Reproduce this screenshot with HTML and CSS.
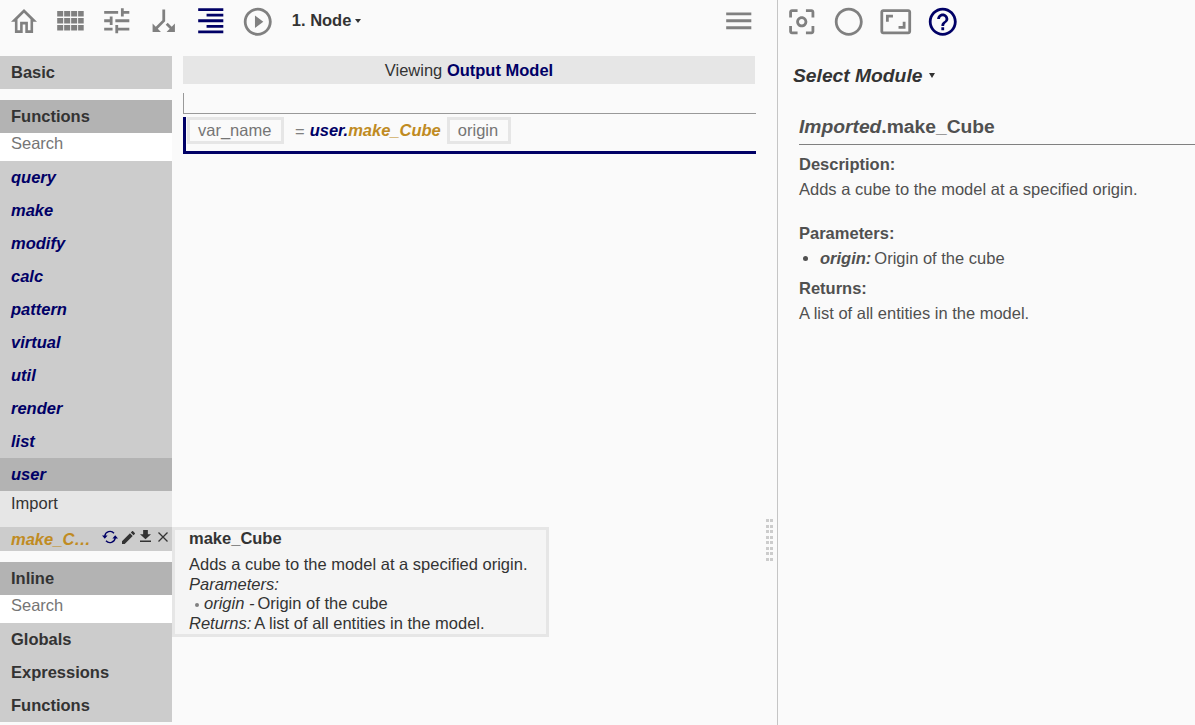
FILE: index.html
```
<!DOCTYPE html>
<html lang="en">
<head>
<meta charset="utf-8">
<title>Node editor</title>
<link rel="stylesheet" href="styles.css">
</head>
<body>
<div class="app">
  <section class="editor">
    <header class="toolbar">
      <span class="tool"><svg class="home" viewBox="2 3 20 17" preserveAspectRatio="none"><path d="M12 5.69l5 4.5V18h-2v-6H9v6H7v-7.81l5-4.5M12 3L2 12h3v8h6v-6h2v6h6v-8h3L12 3z"/></svg></span>
      <span class="tool"><svg class="icon grid" viewBox="0 0 24 24"><path d="M3 9h4.300V5H3zM3 14h4.300v-4H3zM8 14h4.300v-4H8zM13 14h4.300v-4H13zM8 9h4.300V5H8zM13 5v4h4.300V5zM18 14h4v-4h-4zM3 19h4.300v-4H3zM8 19h4.300v-4H8zM13 19h4.300v-4H13zM18 19h4v-4h-4zM18 5v4h4V5z"/></svg></span>
      <span class="tool"><svg class="icon" viewBox="0 0 24 24"><path d="M3 17v2h6v-2H3zM3 5v2h10V5H3zm10 16v-2h8v-2h-8v-2h-2v6h2zM7 9v2H3v2h4v2h2V9H7zm14 4v-2H11v2h10zm-6-4h2V7h4V5h-4V3h-2v6z"/></svg></span>
      <span class="tool"><svg class="icon flip" viewBox="0 0 24 24"><path d="M14 4l2.29 2.29-2.88 2.88 1.42 1.42 2.88-2.88L20 10V4zm-4 0H4v6l2.29-2.29 4.71 4.7V20h2v-8.41l-5.29-5.3z"/></svg></span>
      <span class="tool active"><svg class="icon" viewBox="0 0 24 24"><path d="M3 21h18v-2H3v2zm6-4h12v-2H9v2zm-6-4h18v-2H3v2zm6-4h12V7H9v2zM3 3v2h18V3H3z"/></svg></span>
      <span class="tool"><svg class="icon low" viewBox="0 0 24 24"><path d="M10 16.5l6-4.5-6-4.5v9zM12 2C6.48 2 2 6.48 2 12s4.48 10 10 10 10-4.48 10-10S17.52 2 12 2zm0 18c-4.41 0-8-3.59-8-8s3.59-8 8-8 8 3.59 8 8-3.59 8-8 8z"/></svg></span>
      <span class="node-name">1. Node<i class="caret"></i></span>
      <span class="tool menu"><svg class="icon" viewBox="0 0 24 24"><path d="M3 18h18v-2H3v2zm0-5h18v-2H3v2zm0-7v2h18V6H3z"/></svg></span>
    </header>
    <div class="workspace">
      <nav class="sidebar">
        <div class="row head">Basic</div>
        <div class="group">
          <div class="row head open">Functions</div>
          <div class="search">Search</div>
          <div class="row module">query</div>
          <div class="row module">make</div>
          <div class="row module">modify</div>
          <div class="row module">calc</div>
          <div class="row module">pattern</div>
          <div class="row module">virtual</div>
          <div class="row module">util</div>
          <div class="row module">render</div>
          <div class="row module">list</div>
          <div class="row module open">user</div>
          <div class="import">Import</div>
          <div class="user-func">
            <span class="func-name">make_C…</span>
            <span class="actions">
              <svg class="sync" viewBox="0 0 16 14"><path d="M2.800 6A5.300 5.300 0 0 1 12 3.200M13.200 8A5.300 5.300 0 0 1 4 10.800"/><path class="solid" d="M0 5.400h5.600L2.800 8.800zM16 8.600h-5.600l2.800-3.400z"/></svg>
              <svg class="pencil" viewBox="3 3 18 18"><path d="M3 17.25V21h3.75L17.81 9.94l-3.75-3.75L3 17.25zM20.71 7.04a1 1 0 0 0 0-1.41l-2.34-2.34a1 1 0 0 0-1.41 0l-1.83 1.83 3.75 3.75 1.83-1.83z"/></svg>
              <svg class="download" viewBox="5 3 14 17" preserveAspectRatio="none"><path d="M19 9h-4V3H9v6H5l7 7 7-7zM5 18v2h14v-2H5z"/></svg>
              <svg class="close" viewBox="0 0 10 10"><path d="M.5.5l9 9M9.5.5l-9 9"/></svg>
            </span>
            <aside class="tooltip">
              <h4>make_Cube</h4>
              <p>Adds a cube to the model at a specified origin.</p>
              <p><em>Parameters:</em></p>
              <p class="param"><i class="dot"></i><em>origin -</em><span class="value">Origin of the cube</span></p>
              <p><em>Returns:</em><span class="value">A list of all entities in the model.</span></p>
            </aside>
          </div>
        </div>
        <div class="group">
          <div class="row head open">Inline</div>
          <div class="search">Search</div>
          <div class="row head">Globals</div>
          <div class="row head">Expressions</div>
          <div class="row head">Functions</div>
        </div>
      </nav>
      <main class="procedure">
        <div class="viewing">Viewing&nbsp;<b>Output Model</b></div>
        <div class="blank-line"></div>
        <div class="statement">
          <span class="field var">var_name</span>
          <span class="equals">=</span>
          <span class="call">user.<span class="fn">make_Cube</span></span>
          <span class="field arg">origin</span>
        </div>
      </main>
    </div>
  </section>
  <div class="gutter">
    <div class="grip"><i></i><i></i><i></i><i></i><i></i><i></i><i></i><i></i><i></i><i></i><i></i><i></i><i></i><i></i><i></i><i></i></div>
  </div>
  <section class="help">
    <header class="toolbar">
      <span class="tool"><svg class="icon low" viewBox="0 0 24 24"><path d="M5 15H3v4c0 1.100.9 2 2 2h4v-2H5v-4zM5 5h4V3H5c-1.100 0-2 .9-2 2v4h2V5zm14-2h-4v2h4v4h2V5c0-1.100-.9-2-2-2zm0 16h-4v2h4c1.100 0 2-.9 2-2v-4h-2v4zM12 8c-2.210 0-4 1.790-4 4s1.790 4 4 4 4-1.790 4-4-1.790-4-4-4zm0 6c-1.100 0-2-.9-2-2s.9-2 2-2 2 .9 2 2-.9 2-2 2z"/></svg></span>
      <span class="tool"><svg class="icon low" viewBox="0 0 24 24"><path d="M12 2C6.480 2 2 6.480 2 12s4.480 10 10 10 10-4.480 10-10S17.520 2 12 2zm0 18c-4.410 0-8-3.590-8-8s3.590-8 8-8 8 3.590 8 8-3.590 8-8 8z"/></svg></span>
      <span class="tool"><svg class="icon low" viewBox="0 0 24 24"><path d="M19 12h-2v3h-3v2h5v-5zM7 9h3V7H5v5h2V9zm14-6H3c-1.100 0-2 .9-2 2v14c0 1.100.9 2 2 2h18c1.100 0 2-.9 2-2V5c0-1.100-.9-2-2-2zm0 16.010H3V4.990h18v14.020z"/></svg></span>
      <span class="tool active"><svg class="icon low" viewBox="0 0 24 24"><path d="M11 18h2v-2h-2v2zm1-16C6.480 2 2 6.480 2 12s4.480 10 10 10 10-4.480 10-10S17.520 2 12 2zm0 18c-4.410 0-8-3.590-8-8s3.590-8 8-8 8 3.590 8 8-3.590 8-8 8zm0-14c-2.210 0-4 1.790-4 4h2c0-1.100.9-2 2-2s2 .9 2 2c0 2-3 1.750-3 5h2c0-2.250 3-2.500 3-5 0-2.210-1.790-4-4-4z"/></svg></span>
    </header>
    <div class="select-module">Select Module<i class="caret"></i></div>
    <article class="doc">
      <h3><em>Imported</em>.make_Cube</h3>
      <h5>Description:</h5>
      <p class="description">Adds a cube to the model at a specified origin.</p>
      <h5>Parameters:</h5>
      <p class="doc-param"><i class="dot"></i><b><em>origin:</em></b><span>Origin of the cube</span></p>
      <h5 class="returns">Returns:</h5>
      <p>A list of all entities in the model.</p>
    </article>
  </section>
</div>
</body>
</html>
```
FILE: styles.css
```
* { box-sizing: border-box; }
body {
  margin: 0;
  height: 725px;
  overflow: hidden;
  background: #fafafa;
  color: #333;
  font: 16.5px/20px "Liberation Sans", Arial, sans-serif;
}
h3, h4, h5, p { margin: 0; }
svg { display: block; fill: currentColor; }
.app { display: flex; height: 725px; }
.editor { width: 756px; }

.toolbar { display: flex; height: 56px; color: #808080; }
.tool { width: 46.8px; height: 41px; display: flex; align-items: center; justify-content: center; flex: none; }
.tool.active { color: #006; }
.icon { width: 33.5px; height: 33.5px; }
.low { margin-top: 2px; }
.flip { transform: scaleY(-1); }
.home { width: 26px; height: 24px; margin-left: 1px; }
.node-name { margin-left: 11px; padding-top: 10px; color: #333; font-weight: bold; flex: 1; }
.menu { margin-right: -6px; }
.caret {
  display: inline-block;
  margin-left: 4px;
  vertical-align: 3px;
  border: 3px solid transparent;
  border-top: 4px solid #333;
  border-bottom: 0;
}

.workspace { display: flex; gap: 11px; }
.sidebar { width: 172px; display: flex; flex-direction: column; gap: 11px; flex: none; }
.row { height: 33px; padding: 6px 11px 0; background: #ccc; font-weight: bold; }
.row.open { background: #b3b3b3; }
.module { color: #006; font-style: italic; }
.search { height: 28px; padding: 0 11px; background: #fff; color: #757575; }
.import { height: 36px; padding: 2px 11px 0; background: #e6e6e6; }
.user-func { position: relative; height: 24px; display: flex; background: #ccc; }
.func-name { width: 102px; padding: 2px 0 0 11px; color: #c08b22; font-weight: bold; font-style: italic; }
.actions { display: flex; align-items: center; height: 20px; gap: 4px; }
.actions .pencil { width: 13px; height: 13px; }
.actions .sync { width: 16px; height: 14px; margin-top: -1px; fill: none; stroke: #006; stroke-width: 1.4; }
.sync .solid { fill: #006; stroke: none; }
.actions .download { width: 11px; height: 12px; margin: -2px 3px 0 1px; }
.actions .close { width: 10px; height: 10px; margin-top: -1px; stroke: #333; stroke-width: 1.3; }
.tooltip {
  position: absolute;
  left: 172px;
  top: 0;
  z-index: 2;
  width: 377px;
  height: 110px;
  padding: 0 14px;
  border: 3px solid #e6e6e6;
  background: #f5f5f5;
  line-height: 19.6px;
  white-space: nowrap;
}
.tooltip h4 { font-size: 16.5px; line-height: 17px; margin-bottom: 8px; }
.tooltip .value { margin-left: 3px; }
.param { display: flex; align-items: center; }
.dot { width: 5px; height: 5px; border-radius: 50%; background: currentColor; flex: none; }
.param .dot { margin: 3px 5px 0 6px; width: 4px; height: 4px; background: #808080; }

.procedure { flex: 1; }
.viewing { width: 572px; height: 28px; display: flex; justify-content: center; padding-top: 4px; background: #e6e6e6; }
.viewing b { color: #006; }
.blank-line { height: 21px; margin: 9px 0 3px; border-left: 1px solid #999; border-bottom: 1px solid #999; }
.statement {
  height: 37px;
  display: flex;
  align-items: flex-start;
  border-left: 3px solid #006;
  border-bottom: 3px solid #006;
}
.field { height: 27px; padding: 0 8px; border: 3px solid #e6e6e6; color: #757575; }
.var { width: 97px; margin-left: 1px; }
.arg { width: 64px; margin-left: 6px; }
.equals { margin: 4px 5px 0 11px; color: #808080; }
.call { margin-top: 3px; color: #006; font-weight: bold; font-style: italic; }
.fn { color: #c08b22; }

.gutter { width: 22px; border-right: 1px solid #c5c5c5; padding: 519px 0 0 10px; }
.grip { display: grid; grid-template-columns: 3px 3px; column-gap: 1px; row-gap: 2.5px; }
.grip i { height: 3px; background: #ccc; }

.help { flex: 1; }
.help .tool { width: 47px; }
.select-module { margin: 9px 0 0 15px; font-size: 19.25px; line-height: 21px; height: 20px; font-weight: bold; font-style: italic; }
.select-module .caret { margin-left: 7px; vertical-align: 4px; border-width: 5px 3.5px 0; }
.doc { padding: 30px 0 0 21px; color: #505050; }
.doc h3 { height: 30px; font-size: 19.25px; line-height: 23px; border-bottom: 1px solid #808080; margin-bottom: 9px; }
.doc h5 { font-size: 16.5px; margin-bottom: 5px; }
.description { margin-bottom: 24px; }
.doc-param { display: flex; align-items: center; }
.doc-param .dot { margin: 0 12px 0 4px; }
.doc-param span { margin-left: 3px; }
.doc .returns { margin-top: 10px; }
```
